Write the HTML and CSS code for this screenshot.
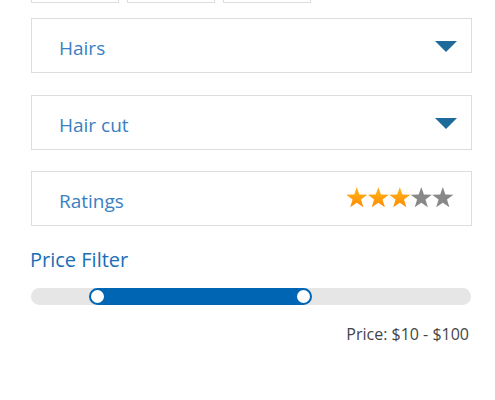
FILE: index.html
```html
<!DOCTYPE html>
<html>
<head>
<meta charset="utf-8">
<link rel="stylesheet" href="styles.css">
</head>
<body>
<div class="wrap">
  <div class="chips">
    <div class="chip"></div>
    <div class="chip"></div>
    <div class="chip"></div>
  </div>
  <div class="select">
    <span class="label">Hairs</span>
    <span class="caret"></span>
  </div>
  <div class="select">
    <span class="label">Hair cut</span>
    <span class="caret"></span>
  </div>
  <div class="select last">
    <span class="label">Ratings</span>
    <svg class="stars" width="108" height="21" viewBox="0 0 108 21">
      <defs>
        <linearGradient id="gold" x1="0" y1="0" x2="0" y2="1">
          <stop offset="0" stop-color="#ffb81c"/>
          <stop offset="1" stop-color="#ff8a00"/>
        </linearGradient>
        <polygon id="star" points="10.8,0 13.4,7.5 21.4,7.7 15,12.5 17.4,20.3 10.8,15.7 4.2,20.3 6.6,12.5 0.2,7.7 8.2,7.5"/>
      </defs>
      <use href="#star" x="0" fill="url(#gold)"/>
      <use href="#star" x="21.5" fill="url(#gold)"/>
      <use href="#star" x="43" fill="url(#gold)"/>
      <use href="#star" x="64.5" fill="#888888"/>
      <use href="#star" x="86" fill="#888888"/>
    </svg>
  </div>
  <h2 class="title">Price Filter</h2>
  <div class="slider">
    <div class="range" style="left: 66.5px; width: 205.5px;"></div>
    <span class="thumb" style="left: 58px;"></span>
    <span class="thumb" style="left: 263.5px;"></span>
  </div>
  <div class="price">Price: $10 - $100</div>
</div>
</body>
</html>
```

FILE: styles.css
```css
html, body {
  margin: 0;
  padding: 0;
  background: #fff;
}
body {
  font-family: "Open Sans", "Noto Sans", sans-serif;
  overflow: hidden;
}
.wrap {
  width: 441px;
  padding-left: 31px;
}
.chips {
  display: flex;
  gap: 8px;
  margin-top: -37px;
}
.chip {
  width: 88px;
  height: 40px;
  box-sizing: border-box;
  border: 1px solid #dedede;
}
.select {
  box-sizing: border-box;
  height: 55px;
  margin-top: 15px;
  border: 1px solid #dddddd;
  display: flex;
  align-items: center;
  justify-content: space-between;
  padding: 4px 14px 0 27px;
}
.select + .select {
  margin-top: 22px;
}
.select.last {
  margin-top: 21px;
}
.label {
  font-size: 19px;
  color: #3a80c3;
}
.caret {
  width: 0;
  height: 0;
  border-left: 11.5px solid transparent;
  border-right: 11.5px solid transparent;
  border-top: 11px solid #1d6a9b;
  margin-top: -2px;
}
.stars {
  display: block;
  margin-right: 3px;
  margin-top: -6px;
}
.title {
  margin: 20px 0 0 -1px;
  font-size: 20px;
  font-weight: normal;
  color: #1b6db5;
  line-height: 27px;
}
.slider {
  position: relative;
  height: 17px;
  margin-top: 15px;
  background: #e6e6e6;
  border-radius: 9px;
  width: 440px;
}
.range {
  position: absolute;
  top: 0;
  height: 17px;
  background: #0066b3;
}
.thumb {
  position: absolute;
  top: 0;
  width: 17px;
  height: 17px;
  box-sizing: border-box;
  border-radius: 50%;
  background: #fff;
  border: 2px solid #0066b3;
}
.price {
  text-align: right;
  width: 438px;
  margin-top: 18px;
  font-size: 16px;
  color: #444;
}
```
